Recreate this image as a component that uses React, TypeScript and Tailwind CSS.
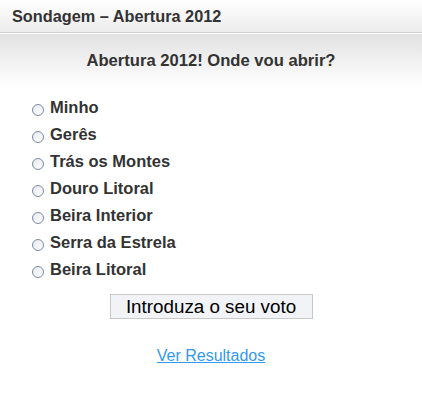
import React from "react";

const options = [
  "Minho",
  "Gerês",
  "Trás os Montes",
  "Douro Litoral",
  "Beira Interior",
  "Serra da Estrela",
  "Beira Litoral",
];

function Radio() {
  return (
    <span className="inline-block w-[12px] h-[12px] rounded-full border border-[#7b8aa3] bg-gradient-to-br from-[#e6e9ee] to-white shrink-0 mt-[6px]" />
  );
}

export default function App() {
  return (
    <div className="w-[422px] h-[400px] bg-white font-['Liberation_Sans',Arial,sans-serif] text-[#333]">
      <div className="h-[33px] bg-gradient-to-b from-white to-[#ececec] border-b border-[#d0d0d0] pl-[12px] pt-[5px]">
        <span className="text-[16.3px] font-bold text-[#333] leading-[19px]">Sondagem – Abertura 2012</span>
      </div>
      <div className="h-px bg-white" />
      <div className="bg-gradient-to-b from-[#e2e2e2] to-white pt-[15px] pb-[14px] text-center">
        <span className="text-[16.6px] font-bold leading-[19px]">Abertura 2012! Onde vou abrir?</span>
      </div>
      <div className="flex flex-col pl-[32px] pt-[11px] gap-[8px]">
        {options.map((o) => (
          <label key={o} className="flex items-start gap-[6px] h-[19px]">
            <Radio />
            <span className="text-[16.5px] font-bold leading-[19px]">{o}</span>
          </label>
        ))}
      </div>
      <div className="flex justify-center mt-[15px]">
        <button className="w-[203px] h-[25px] bg-[#f1f3f6] border border-[#c8c8c8] text-[18.8px] text-black leading-[21px] font-['Liberation_Sans',Arial,sans-serif]">
          Introduza o seu voto
        </button>
      </div>
      <div className="text-center mt-[25px]">
        <a href="#" className="text-[16px] text-[#3399ee] underline leading-[18px]">Ver Resultados</a>
      </div>
    </div>
  );
}
